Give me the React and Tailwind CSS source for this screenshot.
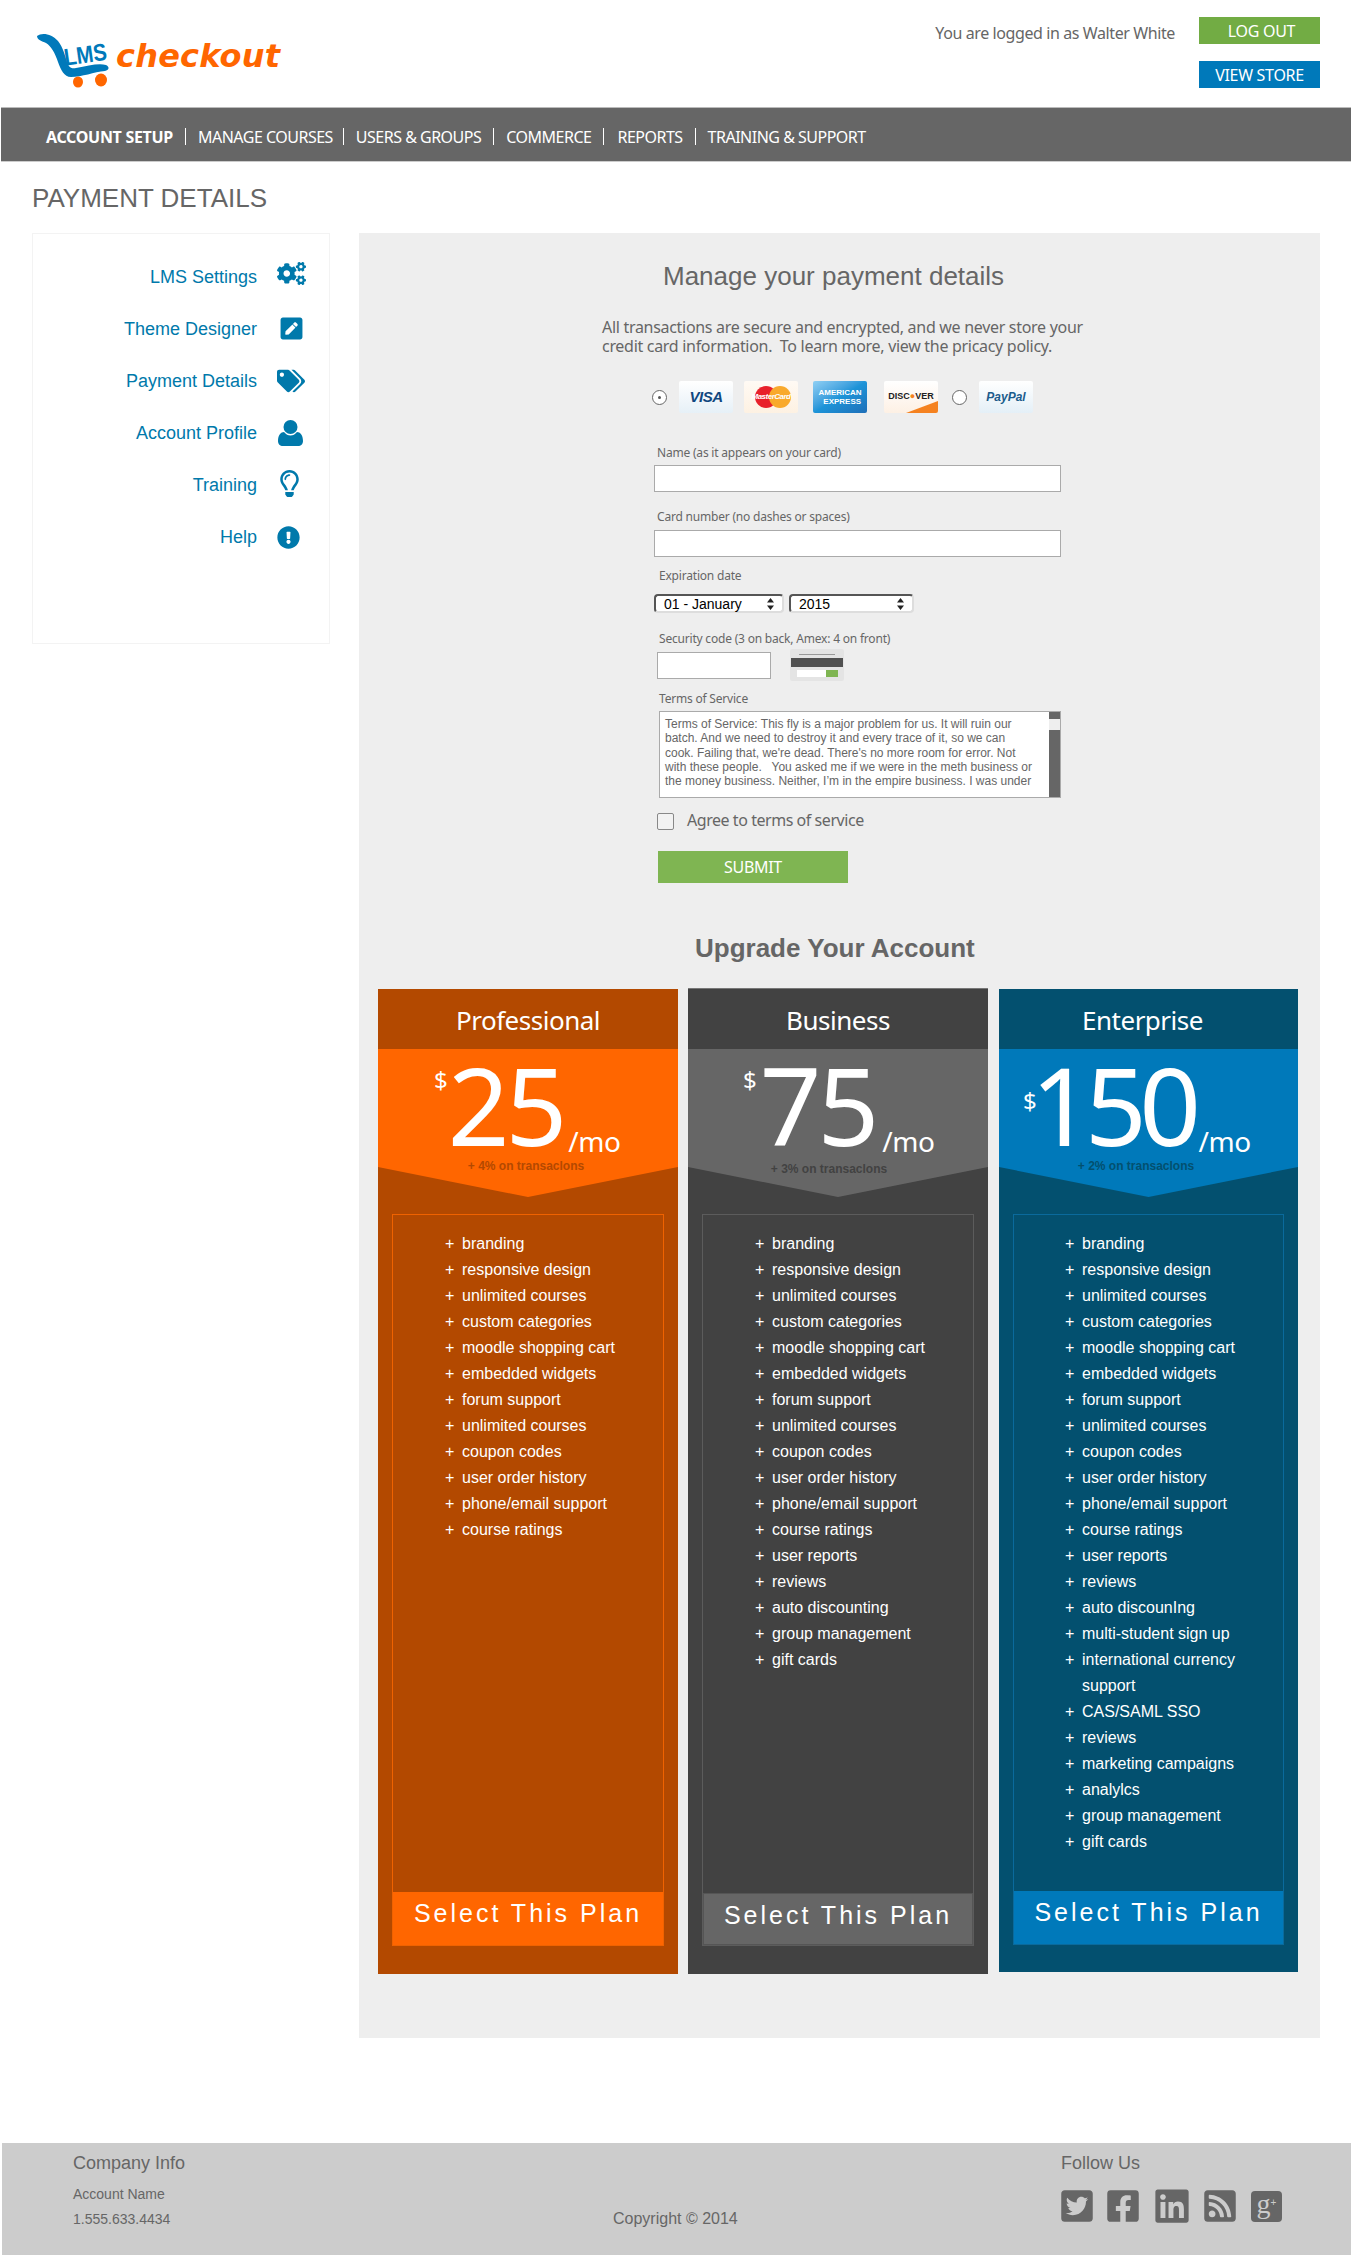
import React from "react";
import { FaCogs, FaPenSquare, FaTags, FaRegLightbulb, FaExclamationCircle, FaTwitterSquare, FaFacebookSquare, FaLinkedin, FaRssSquare } from "react-icons/fa";

const droid = "font-['Noto_Sans','Open_Sans',sans-serif]";
const arial = "font-['Liberation_Sans',Arial,sans-serif]";

const base = ["branding","responsive design","unlimited courses","custom categories","moodle shopping cart","embedded widgets","forum support","unlimited courses","coupon codes","user order history","phone/email support","course ratings"];

const plans = [
  {
    name: "Professional", price: "25", note: "+ 4% on transaclons",
    features: base,
    card: "bg-[#b34900] w-[300px] h-[985px] pb-[28px]",
    title: "",
    price_bg: "bg-[#ff6600]",
    noteCls: "text-[#b34900] pr-[4px]",
    box: "border-[#ef6200]", btn: "bg-[#ff6600] h-[53px] pb-[10px]", digits: "pl-[56px]", dollarTop: "mt-[18px]", gap: "ml-[0px] tracking-[-4px]", mo: "ml-[5px]", ul: "pl-[52px]",
  },
  {
    name: "Business", price: "75", note: "+ 3% on transaclons",
    features: [...base, "user reports","reviews","auto discounting","group management","gift cards"],
    card: "bg-[#424242] w-[300px] h-[986px] pb-[28px] ml-[10px] -mt-[1px] border-t border-[#777]",
    title: "",
    price_bg: "bg-[#666666]",
    noteCls: "text-[#424242] mt-[3px] pr-[18px]",
    box: "border-[#5c5c5c]", btn: "bg-[#666666] border border-[#555] h-[52px] pb-[6px]", digits: "pl-[55px]", dollarTop: "mt-[18px]", gap: "ml-[3px] tracking-[-4px]", mo: "ml-[7px]", ul: "pl-[52px]",
  },
  {
    name: "Enterprise", price: "150", note: "+ 2% on transaclons",
    features: [...base, "user reports","reviews","auto discounIng","multi-student sign up","international currency\nsupport","CAS/SAML SSO","reviews","marketing campaigns","analylcs","group management","gift cards"],
    card: "bg-[#03506f] w-[299px] h-[983px] pb-[27px] ml-[11px]",
    title: "pr-[12px]",
    price_bg: "bg-[#0079ba]",
    noteCls: "text-[#03506f] pr-[25px]",
    box: "border-[#0a6a9c]", btn: "bg-[#0079ba] h-[53px] pb-[10px]", digits: "pl-[24px]", dollarTop: "mt-[39px]", gap: "-ml-[6px] tracking-[-7.5px]", mo: "ml-[5px]", ul: "pl-[51px]",
  },
];

function Logo() {
  return (
    <div className="flex items-start">
      <svg width="76" height="58" viewBox="0 0 76 58" className="mt-[32px] ml-[36px] shrink-0 overflow-visible">
        <path d="M1 4 C6 0 16 2 22 9 C27 15 29 24 31 30 C33 36 36 37 40 36 C52 34 62 31 70 33 C74 35 73 38 69 39 C58 40 46 45 35 45 C28 45 25 38 22 30 C19 21 15 14 10 11 C6 9 1 8 1 4 Z" fill="#0079ba" />
        <text x="28" y="31" transform="rotate(-8 48 24)" fontSize="24" fontWeight="700" fill="#0079ba" fontFamily="Liberation Sans, sans-serif" textLength="43" lengthAdjust="spacingAndGlyphs">LMS</text>
        <ellipse cx="42" cy="50" rx="5" ry="5.5" fill="#ff6600" />
        <ellipse cx="65" cy="48" rx="6" ry="6.5" fill="#ff6600" />
      </svg>
      <span className="font-['DejaVu_Sans',sans-serif] ml-[4px] mt-[36px] text-[32px] leading-[40px] font-bold italic text-[#ff6600] tracking-[0.2px]">checkout</span>
    </div>
  );
}

function CardLogo({ className, children }) {
  return <div className={`w-[54px] h-[32px] shrink-0 rounded-[2px] flex items-center justify-center overflow-hidden relative ${className}`}>{children}</div>;
}

function Radio({ checked }) {
  return (
    <span className="w-[15px] h-[15px] rounded-full border border-[#666] bg-white flex items-center justify-center shrink-0">
      {checked && <span className="w-[3px] h-[3px] rounded-full bg-[#555]" />}
    </span>
  );
}

function Plan({ p }) {
  return (
    <div className={`${p.card} flex flex-col text-white shrink-0`}>
      <div className={`${droid} ${p.title} h-[60px] flex items-center justify-center text-[26px] tracking-[-0.5px] pt-[3px] shrink-0`}>{p.name}</div>
      <div className={`${p.price_bg} h-[148px] shrink-0 [clip-path:polygon(0_0,100%_0,100%_118px,50%_148px,0_118px)]`}>
        <div className={`${droid} flex items-start h-[110px] ${p.digits}`}>
          <span className={`text-[24px] leading-[26px] ${p.dollarTop}`}>$</span>
          <span className={`text-[108px] leading-[104px] mt-[4px] ${p.gap}`}>{p.price}</span>
          <span className={`text-[28px] tracking-[-0.5px] leading-[36px] self-end ${p.mo}`}>/mo</span>
        </div>
        <div className={`${arial} ${p.noteCls} text-center text-[12px] leading-[14px] font-bold`}>{p.note}</div>
      </div>
      <div className={`mx-[14px] mt-[17px] flex-1 flex flex-col border ${p.box}`}>
        <ul className={`${arial} ${p.ul} flex-1 pt-[16px] pr-[10px] text-[16px] leading-[26px]`}>
          {p.features.map((f, i) => (
            <li key={i} className="flex">
              <span className="w-[17px] shrink-0">+</span>
              <span className="whitespace-pre-line">{f}</span>
            </li>
          ))}
        </ul>
        <div className={`${p.btn} ${arial} flex items-center justify-center text-[25px] tracking-[3px] shrink-0`}>Select This Plan</div>
      </div>
    </div>
  );
}

function Label({ children, className = "" }) {
  return <div className={`${droid} text-[12px] tracking-[-0.2px] leading-[16px] text-[#666] ${className}`}>{children}</div>;
}

function SelectBox({ value, w }) {
  return (
    <div className={`${w} h-[19px] rounded-[4px] border-2 border-t-[#555] border-l-[#555] border-r-[#ddd] border-b-[#ddd] bg-white flex items-center justify-between pl-[8px] pr-[8px] shrink-0`}>
      <span className={`${arial} text-[14px] text-black leading-[16px]`}>{value}</span>
      <svg width="7" height="12" viewBox="0 0 7 12"><path d="M3.5 0 L7 4.5 H0 Z M3.5 12 L0 7.5 H7 Z" fill="#222" /></svg>
    </div>
  );
}

function UserIcon() {
  return (
    <svg width="25" height="26" viewBox="0 0 25 26" fill="currentColor">
      <circle cx="12.5" cy="7" r="7" />
      <path d="M0 21 C0 15 3 12 6 12 C8 14.5 10 15.5 12.5 15.5 C15 15.5 17 14.5 19 12 C22 12 25 15 25 21 C25 24 23 26 20 26 H5 C2 26 0 24 0 21 Z" />
    </svg>
  );
}

export default function App() {
  const side = [
    ["LMS Settings", <FaCogs size={29} />, "ml-[0px] -mt-[8px]"],
    ["Theme Designer", <FaPenSquare size={25} />, "ml-[2px] -mt-[2px]"],
    ["Payment Details", <FaTags size={28} />, "ml-[0px]"],
    ["Account Profile", <UserIcon />, "ml-[1px]"],
    ["Training", <FaRegLightbulb size={27} />, "-ml-[1px] -mt-[3px]"],
    ["Help", <FaExclamationCircle size={23} />, "ml-[0px]"],
  ];
  return (
    <div className={`${arial} w-[1351px] h-[2256px] bg-white flex flex-col text-[#666]`}>
      <header className="h-[107px] flex justify-between shrink-0">
        <Logo />
        <div className="flex pr-[31px]">
          <div className={`${droid} text-[16px] tracking-[-0.4px] leading-[20px] mt-[23px] text-[#666]`}>You are logged in as Walter White</div>
          <div className="ml-[24px] mt-[17px] w-[121px] flex flex-col gap-[17px]">
            <div className={`${droid} h-[27px] bg-[#72ac44] text-white text-[16px] tracking-[-0.3px] flex items-center justify-center pl-[4px]`}>LOG OUT</div>
            <div className={`${droid} h-[27px] bg-[#0079ba] text-white text-[16px] tracking-[-0.3px] flex items-center justify-center`}>VIEW STORE</div>
          </div>
        </div>
      </header>

      <nav className={`${droid} ml-[1px] h-[55px] bg-[#666] border-t border-[#bbb] border-b-[#ccc] border-b flex items-center pl-[45px] pt-[4px] text-white text-[16px] tracking-[-0.5px] shrink-0`}>
        <span className="font-bold tracking-[-0.3px]">ACCOUNT SETUP</span>
        <span className="mx-[12px] w-[1px] h-[17px] bg-white" />
        <span>MANAGE COURSES</span>
        <span className="ml-[10px] mr-[12px] w-[1px] h-[17px] bg-white" />
        <span>USERS & GROUPS</span>
        <span className="mx-[12px] w-[1px] h-[17px] bg-white" />
        <span>COMMERCE</span>
        <span className="ml-[12px] mr-[13px] w-[1px] h-[17px] bg-white" />
        <span>REPORTS</span>
        <span className="mx-[12px] w-[1px] h-[17px] bg-white" />
        <span>TRAINING & SUPPORT</span>
      </nav>

      <h1 className="ml-[32px] mt-[20px] text-[26px] leading-[32px] text-[#666] shrink-0">PAYMENT DETAILS</h1>

      <div className="flex items-start pl-[32px] mt-[19px] shrink-0">
        <aside className="w-[298px] h-[411px] border border-[#f3f3f3] shrink-0 pt-[17px]">
          {side.map(([t, ic, cls]) => (
            <div key={t} className="h-[52px] flex items-center justify-end text-[#0079ab]">
              <span className="text-[18px] leading-[24px]">{t}</span>
              <span className="w-[72px] pl-[20px] flex items-center justify-start"><span className={cls}>{ic}</span></span>
            </div>
          ))}
        </aside>

        <main className="ml-[29px] w-[961px] h-[1805px] bg-[#eeeeee] shrink-0 flex flex-col pl-[19px]">
          <h2 className="ml-[285px] mt-[27px] text-[26px] leading-[32px] text-[#666]">Manage your payment details</h2>
          <p className={`${droid} ml-[224px] mt-[26px] text-[16px] tracking-[-0.3px] leading-[19px] text-[#666] whitespace-pre`}>{"All transactions are secure and encrypted, and we never store your\ncredit card information.  To learn more, view the pricacy policy."}</p>

          <div className="ml-[274px] mt-[24px] flex items-center h-[34px]">
            <Radio checked />
            <CardLogo className="ml-[12px] bg-gradient-to-b from-white to-[#e6f0f7]">
              <span className={`${arial} text-[15px] font-bold italic text-[#10477f] tracking-[-0.5px]`}>VISA</span>
            </CardLogo>
            <CardLogo className="ml-[11px] bg-gradient-to-b from-[#fffaf4] to-[#fdf1e2]">
              <span className="w-[22px] h-[22px] rounded-full bg-[#e8202a] absolute left-[11px] top-[5px]" />
              <span className="w-[22px] h-[22px] rounded-full bg-[#f9a92b] absolute left-[25px] top-[5px]" />
              <span className={`${arial} relative text-[8px] font-bold italic text-white tracking-[-0.5px]`}>MasterCard</span>
            </CardLogo>
            <CardLogo className="ml-[15px] bg-gradient-to-br from-[#8fd0f4] via-[#1d94d8] to-[#1f6fb8]">
              <span className={`${arial} text-[8px] leading-[9px] font-bold text-white text-center`}>AMERICAN<br />&nbsp;&nbsp;EXPRESS</span>
            </CardLogo>
            <CardLogo className="ml-[17px] bg-gradient-to-b from-white to-[#fdf0e4]">
              <span className="absolute right-0 bottom-0 w-[32px] h-[12px] bg-[#f58220] [clip-path:polygon(100%_0,100%_100%,0_100%)]" />
              <span className={`${arial} relative text-[9px] font-bold text-[#222]`}>DISC<span className="text-[#f58220]">●</span>VER</span>
            </CardLogo>
            <span className="ml-[14px]"><Radio /></span>
            <CardLogo className="ml-[12px] bg-gradient-to-b from-white to-[#e4eff7]">
              <span className={`${arial} text-[12px] font-bold italic text-[#1d5c8c]`}>PayPal</span>
            </CardLogo>
          </div>

          <div className="ml-[276px] mt-[31px] w-[407px] flex flex-col">
            <Label className="ml-[3px]">Name (as it appears on your card)</Label>
            <div className="mt-[4px] h-[27px] bg-white border border-[#aaa]" />
            <Label className="ml-[3px] mt-[17px]">Card number (no dashes or spaces)</Label>
            <div className="mt-[5px] h-[27px] bg-white border border-[#aaa]" />
            <Label className="ml-[5px] mt-[11px]">Expiration date</Label>
            <div className="mt-[10px] flex gap-[5px]">
              <SelectBox value="01 - January" w="w-[130px]" />
              <SelectBox value="2015" w="w-[125px]" />
            </div>
            <Label className="ml-[5px] mt-[18px]">Security code (3 on back, Amex: 4 on front)</Label>
            <div className="mt-[2px] flex items-center h-[32px]">
              <div className="ml-[3px] w-[114px] h-[27px] bg-white border border-[#aaa]" />
              <div className="ml-[19px] w-[54px] h-[32px] bg-[#e4e4e4] rounded-[2px] flex flex-col items-center pt-[5px]">
                <div className="w-[36px] h-[1px] bg-[#999]" />
                <div className="mt-[3px] w-[52px] h-[9px] bg-[#505050]" />
                <div className="mt-[3px] w-[41px] h-[7px] bg-white flex justify-end"><div className="w-[12px] h-[7px] bg-[#7fb552]" /></div>
              </div>
            </div>
            <Label className="ml-[5px] mt-[10px]">Terms of Service</Label>
            <div className="ml-[5px] mt-[4px] w-[402px] h-[87px] bg-white border border-[#aaa] flex overflow-hidden">
              <div className={`${arial} flex-1 pl-[5px] pt-[5px] text-[12px] leading-[14.3px] text-[#666] whitespace-pre overflow-hidden`}>{"Terms of Service: This fly is a major problem for us. It will ruin our\nbatch. And we need to destroy it and every trace of it, so we can\ncook. Failing that, we're dead. There's no more room for error. Not\nwith these people.   You asked me if we were in the meth business or\nthe money business. Neither, I’m in the empire business. I was under"}</div>
              <div className="w-[11px] bg-[#666] shrink-0 pt-[7px]"><div className="h-[11px] bg-[#eee]" /></div>
            </div>
            <div className="ml-[3px] mt-[15px] flex items-center h-[17px]">
              <span className="w-[17px] h-[17px] rounded-[2px] border border-[#888] bg-[#f2f2f2]" />
              <span className={`${droid} ml-[13px] mb-[3px] text-[16px] tracking-[-0.45px] text-[#666]`}>Agree to terms of service</span>
            </div>
            <div className={`${droid} ml-[4px] mt-[21px] w-[190px] h-[32px] bg-[#7fb552] text-white text-[16px] tracking-[-0.3px] flex items-center justify-center`}>SUBMIT</div>
          </div>

          <h2 className="ml-[317px] mt-[49px] text-[26px] leading-[32px] font-bold text-[#666]">Upgrade Your Account</h2>

          <div className="mt-[25px] flex items-start">
            {plans.map((p) => <Plan key={p.name} p={p} />)}
          </div>
        </main>
      </div>

      <footer className="ml-[2px] mt-[105px] h-[112px] bg-[#cccccc] flex shrink-0 text-[#666]">
        <div className="ml-[71px] w-[540px] pt-[8px]">
          <div className="text-[18px] leading-[24px]">Company Info</div>
          <div className="mt-[10px] text-[14px] leading-[18px]">Account Name</div>
          <div className="mt-[7px] text-[14px] leading-[18px]">1.555.633.4434</div>
        </div>
        <div className="pt-[66px] w-[448px] text-[16px] leading-[20px]">Copyright © 2014</div>
        <div className="pt-[8px]">
          <div className="text-[18px] leading-[24px]">Follow Us</div>
          <div className="mt-[13px] -ml-[2px] flex text-[#666] h-[36px] items-center">
            <FaTwitterSquare size={36} />
            <span className="ml-[10px]"><FaFacebookSquare size={36} /></span>
            <span className="ml-[12px]"><FaLinkedin size={38} /></span>
            <span className="ml-[11px]"><FaRssSquare size={36} /></span>
            <span className="ml-[13px] w-[31px] h-[31px] rounded-[4px] bg-[#666] text-[#ccc] flex items-start justify-center font-['Liberation_Serif',serif] text-[28px] leading-[26px] overflow-hidden">
              g<span className="text-[10px] leading-[24px] font-['Liberation_Sans',sans-serif]">+</span>
            </span>
          </div>
        </div>
      </footer>
    </div>
  );
}
